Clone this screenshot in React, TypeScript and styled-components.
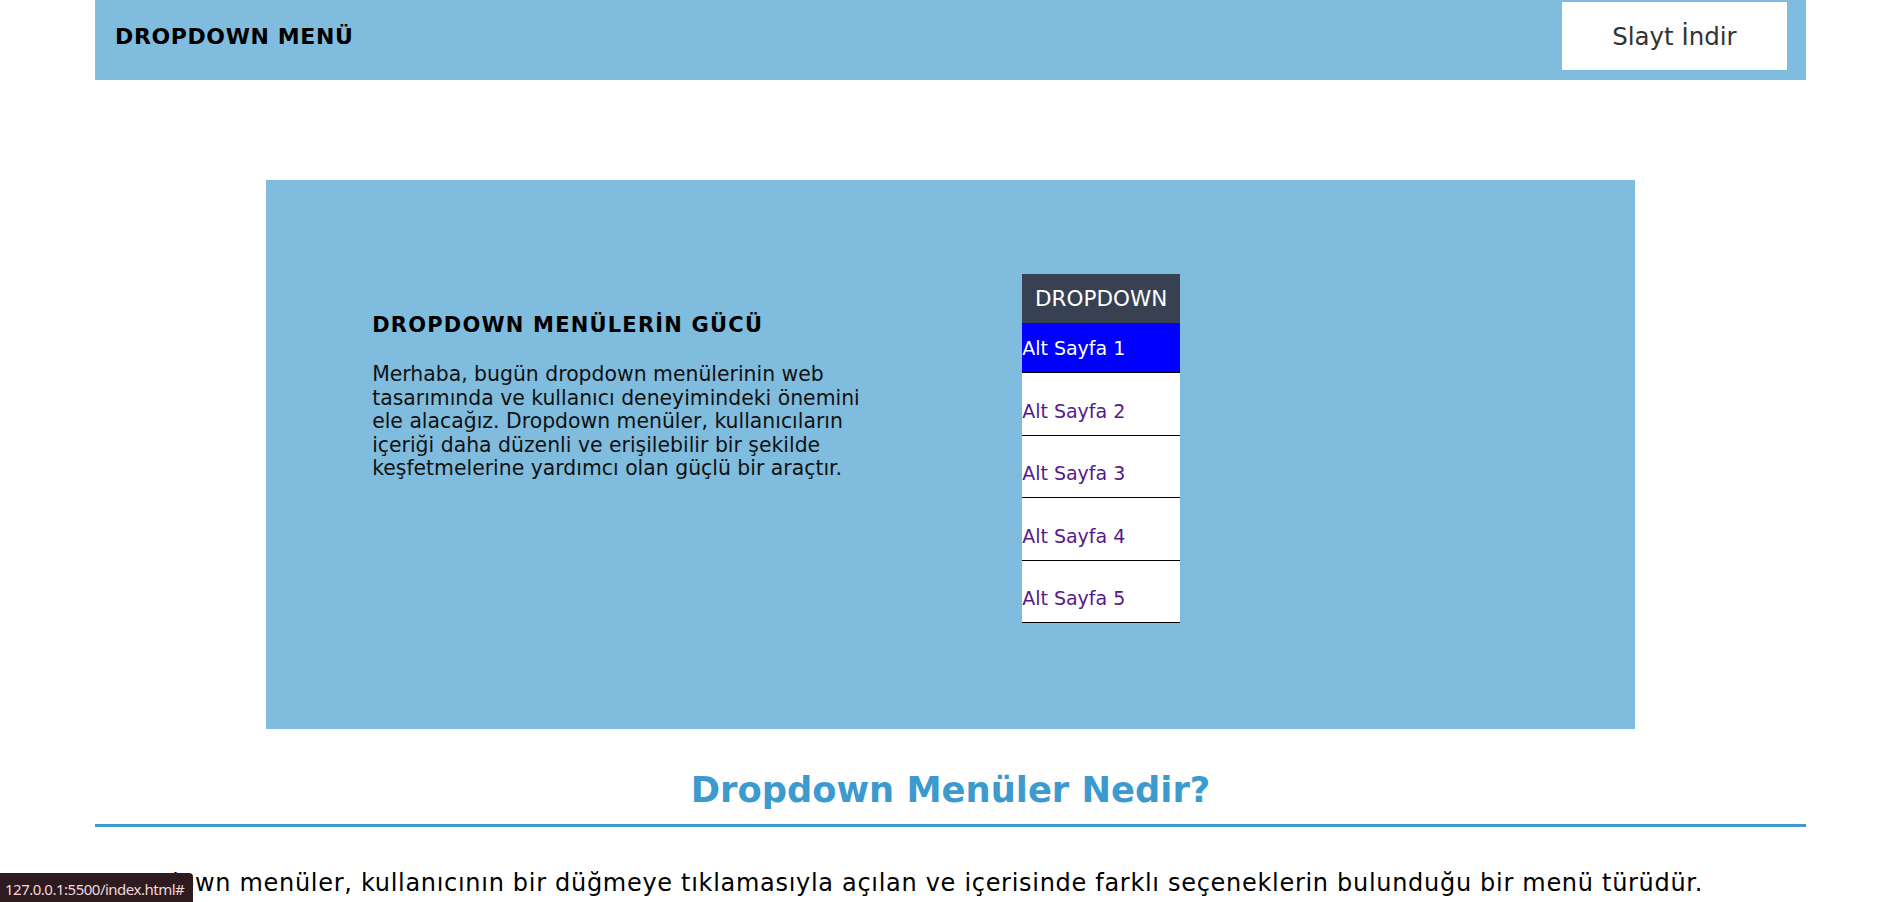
import React from "react";
import styled, { createGlobalStyle } from "styled-components";

const GlobalStyle = createGlobalStyle`
  html, body {
    margin: 0;
    padding: 0;
    background: #ffffff;
  }
  body {
    font-family: "DejaVu Sans", "Noto Sans", sans-serif;
    color: #000;
    overflow: hidden;
  }
`;

const Page = styled.div`
  width: 90%;
  margin: 0 auto;
`;

const Header = styled.header`
  display: flex;
  align-items: center;
  justify-content: space-between;
  box-sizing: border-box;
  height: 80px;
  padding: 2px 19px 10px 20px;
  background: #80bcde;
`;

const Brand = styled.h1`
  margin: 0;
  font-size: 22px;
  font-weight: 700;
  letter-spacing: 0.6px;
  color: #000;
`;

const SlideButton = styled.a`
  display: flex;
  align-items: center;
  justify-content: center;
  width: 225px;
  height: 68px;
  background: #ffffff;
  color: #333333;
  font-size: 24.5px;
  text-decoration: none;
`;

const Hero = styled.section`
  display: flex;
  align-items: flex-start;
  box-sizing: border-box;
  width: 80%;
  height: 549px;
  margin: 100px auto 0;
  padding: 94px 0 0 106px;
  background: #80bcde;
`;

const TextColumn = styled.div`
  width: 510px;
  margin-top: 39px;
`;

const HeroTitle = styled.h2`
  margin: 0;
  font-size: 21px;
  line-height: 24px;
  font-weight: 700;
  letter-spacing: 1.2px;
  color: #000;
`;

const HeroText = styled.p`
  margin: 26px 0 0;
  font-size: 20.4px;
  line-height: 23.6px;
  color: #111;
`;

const Dropdown = styled.nav`
  display: flex;
  flex-direction: column;
  width: 158px;
  margin-left: 140px;
`;

const DropButton = styled.div`
  height: 49px;
  line-height: 49px;
  text-align: center;
  background: #374151;
  color: #ffffff;
  font-size: 21.5px;
`;

const DropItem = styled.a<{ $active?: boolean }>`
  display: block;
  box-sizing: content-box;
  height: 48px;
  line-height: 48px;
  padding-top: ${(p) => (p.$active ? "1px" : "13.5px")};
  border-bottom: 1px solid #000;
  background: ${(p) => (p.$active ? "#0000ff" : "#ffffff")};
  color: ${(p) => (p.$active ? "#ffffff" : "#551a8b")};
  font-size: 19px;
  text-decoration: none;
  white-space: nowrap;
`;

const SectionTitle = styled.h2`
  margin: 40px 0 0;
  padding-bottom: 13px;
  border-bottom: 3px solid #3d9ace;
  text-align: center;
  font-size: 35.3px;
  line-height: 42px;
  font-weight: 700;
  color: #3d9ace;
`;

const BodyText = styled.p`
  margin: 40px 0 0;
  padding-left: 8px;
  font-size: 24px;
  line-height: 32px;
  letter-spacing: 0.7px;
  color: #000;
  white-space: nowrap;
`;

const StatusBar = styled.div`
  position: fixed;
  left: 0;
  bottom: 0;
  box-sizing: border-box;
  width: 193px;
  height: 29px;
  padding: 3px 5px 0;
  display: flex;
  align-items: center;
  background: #2e1b1f;
  border-top-right-radius: 4px;
  color: #f1d8dc;
  font-family: "Noto Sans", "Open Sans", sans-serif;
  font-size: 15px;
  letter-spacing: -0.5px;
  white-space: nowrap;
`;

const items = ["Alt Sayfa 1", "Alt Sayfa 2", "Alt Sayfa 3", "Alt Sayfa 4", "Alt Sayfa 5"];

export default function App() {
  return (
    <>
      <GlobalStyle />
      <Page>
        <Header>
          <Brand>DROPDOWN MENÜ</Brand>
          <SlideButton href="#">Slayt İndir</SlideButton>
        </Header>
        <Hero>
          <TextColumn>
            <HeroTitle>DROPDOWN MENÜLERİN GÜCÜ</HeroTitle>
            <HeroText>
              Merhaba, bugün dropdown menülerinin web tasarımında ve kullanıcı deneyimindeki önemini ele alacağız.
              Dropdown menüler, kullanıcıların içeriği daha düzenli ve erişilebilir bir şekilde keşfetmelerine
              yardımcı olan güçlü bir araçtır.
            </HeroText>
          </TextColumn>
          <Dropdown>
            <DropButton>DROPDOWN</DropButton>
            {items.map((label, i) => (
              <DropItem key={label} href="#" $active={i === 0}>
                {label}
              </DropItem>
            ))}
          </Dropdown>
        </Hero>
        <SectionTitle>Dropdown Menüler Nedir?</SectionTitle>
        <BodyText>
          Dropdown menüler, kullanıcının bir düğmeye tıklamasıyla açılan ve içerisinde farklı seçeneklerin bulunduğu
          bir menü türüdür.
        </BodyText>
      </Page>
      <StatusBar>127.0.0.1:5500/index.html#</StatusBar>
    </>
  );
}
